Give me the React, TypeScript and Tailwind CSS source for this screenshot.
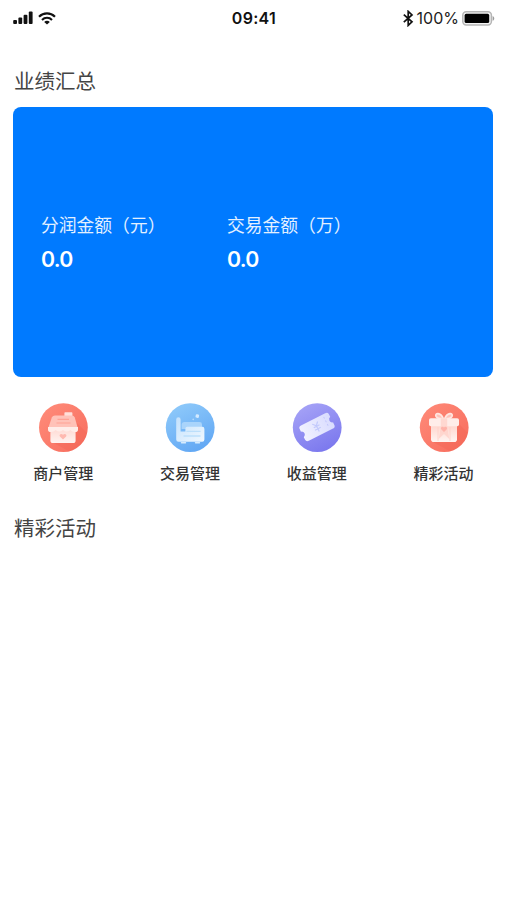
import type { ReactNode } from 'react';

const SignalIcon = () => (
  <svg width="21" height="14" viewBox="0 0 21 14" fill="#111">
    <rect x="0.2" y="9" width="3.8" height="4" rx="1" />
    <rect x="5.4" y="6.6" width="3.8" height="6.4" rx="1" />
    <rect x="10.6" y="3.8" width="3.8" height="9.2" rx="1" />
    <rect x="15.8" y="0.6" width="3.8" height="12.4" rx="1" />
  </svg>
);

const WifiIcon = () => (
  <svg width="18" height="13" viewBox="0 0 18 13" fill="none" stroke="#111" strokeWidth="2.1">
    <path d="M1 4.8 C5.5 0.2 12.5 0.2 17 4.8" />
    <path d="M4 7.9 C6.8 5.1 11.2 5.1 14 7.9" />
    <path d="M9 12.6 L6.2 9.9 C7.8 8.4 10.2 8.4 11.8 9.9 Z" fill="#111" stroke="none" />
  </svg>
);

const BluetoothIcon = () => (
  <svg width="11" height="17" viewBox="0 0 11 17" fill="none" stroke="#111" strokeWidth="1.7">
    <path d="M0.8 4.6 L9 11.8 L5.2 15.4 V1.4 L9 5 L0.8 12.2" />
  </svg>
);

const BatteryIcon = () => (
  <svg width="33" height="15" viewBox="0 0 33 15">
    <rect x="0.8" y="0.8" width="28.6" height="13.2" rx="3.4" fill="#f4f4f4" stroke="#b5b5b5" strokeWidth="1.5" />
    <rect x="2.6" y="2.8" width="24.6" height="9.2" rx="1.6" fill="#000" />
    <path d="M30.6 5 C32.8 5.8 32.8 9 30.6 9.8 Z" fill="#9a9a9a" />
  </svg>
);

const ShopIcon = () => (
  <svg width="50" height="50" viewBox="0 0 50 50">
    <defs>
      <linearGradient id="shopBg" x1="0" y1="0" x2="1" y2="1">
        <stop offset="0" stopColor="#ff8d7b" />
        <stop offset="1" stopColor="#f76c5d" />
      </linearGradient>
      <linearGradient id="shopBody" x1="0" y1="0" x2="0" y2="1">
        <stop offset="0" stopColor="#ffd9d2" />
        <stop offset="1" stopColor="#fff3f0" />
      </linearGradient>
    </defs>
    <circle cx="25.4" cy="24.6" r="24.4" fill="url(#shopBg)" />
    <path d="M39 20 L49 30 A24.4 24.4 0 0 1 31 48.3 L14 39 Z" fill="#f06151" opacity="0.3" />
    <rect x="26.4" y="9.2" width="8" height="6" rx="0.8" fill="#ffe0da" />
    <path d="M17 12.6 H34 Q36 12.6 36.8 14.6 L40 26 H10 L13.8 14.6 Q14.6 12.6 17 12.6 Z" fill="#ffc2b8" />
    <path d="M19.5 16.4 H31 M18.5 20 H32.5" stroke="#ffa194" strokeWidth="1.1" />
    <path d="M12.4 25 H37.6 V37.4 Q37.6 40 35 40 H15 Q12.4 40 12.4 37.4 Z" fill="url(#shopBody)" />
    <path d="M10 24 H40 V26.4 Q40 29 37 29 Q34 29 32.4 27 Q28.7 30 25 27 Q21.3 30 17.6 27 Q16 29 13 29 Q10 29 10 26.4 Z" fill="#ffede9" />
    <path d="M25 36.6 L21.9 33.6 C20.5 31.8 23.3 30 25 31.8 C26.7 30 29.5 31.8 28.1 33.6 Z" fill="#ffb9b0" />
  </svg>
);

const TradeIcon = () => (
  <svg width="50" height="50" viewBox="0 0 50 50">
    <defs>
      <linearGradient id="tradeBg" x1="0.2" y1="0" x2="0.7" y2="1">
        <stop offset="0" stopColor="#8fcafa" />
        <stop offset="1" stopColor="#61a7f4" />
      </linearGradient>
      <linearGradient id="tradeBody" x1="0" y1="0" x2="1" y2="1">
        <stop offset="0" stopColor="#c3e1fc" />
        <stop offset="1" stopColor="#f0f8ff" />
      </linearGradient>
    </defs>
    <circle cx="25.2" cy="24.6" r="24.4" fill="url(#tradeBg)" />
    <path d="M16.6 22 Q16.6 19 19.4 19 H34.5 Q37 19 37 21.4 V26 H16.6 Z" fill="#a9d4fb" />
    <path d="M11.2 16.6 Q11.2 14.2 13.4 14.2 Q15.6 14.2 15.6 16.6 V28.6 H20.4 V25.4 Q20.4 23.8 22.2 23.8 H37.4 Q39.4 23.8 39.4 26 V36.6 Q39.4 38.8 37.2 38.8 H13.6 Q11.2 38.8 11.2 36.4 Z" fill="url(#tradeBody)" />
    <path d="M22 28.4 H35 M19 33 H35" stroke="#bcdffb" strokeWidth="1.4" strokeLinecap="round" />
    <path d="M16.5 39.8 H20.5 M30.5 39.8 H34.5" stroke="#d6ebfd" strokeWidth="1.4" strokeLinecap="round" />
    <rect x="30.6" y="11.4" width="3.4" height="3.4" rx="1" fill="#d4eaff" transform="rotate(12 32.3 13.1)" />
    <circle cx="28.2" cy="16.4" r="0.8" fill="#b8dcfc" />
  </svg>
);

const TicketIcon = () => (
  <svg width="50" height="50" viewBox="0 0 50 50">
    <defs>
      <linearGradient id="ticketBg" x1="0.1" y1="0" x2="0.6" y2="1">
        <stop offset="0" stopColor="#a8a5f7" />
        <stop offset="1" stopColor="#7c79ee" />
      </linearGradient>
      <linearGradient id="ticketBody" x1="0" y1="0" x2="1" y2="0">
        <stop offset="0" stopColor="#f1f1ff" />
        <stop offset="1" stopColor="#d9dcfe" />
      </linearGradient>
    </defs>
    <circle cx="25.2" cy="24.6" r="24.4" fill="url(#ticketBg)" />
    <g transform="rotate(-27 25 24)">
      <path
        d="M11.4 15.4 H38.6 Q41.4 15.4 41.4 18 V20.9 A3.2 3.2 0 0 0 41.4 27.1 V30 Q41.4 32.6 38.6 32.6 H11.4 Q8.6 32.6 8.6 30 V27.1 A3.2 3.2 0 0 0 8.6 20.9 V18 Q8.6 15.4 11.4 15.4 Z"
        fill="url(#ticketBody)"
      />
      <path d="M22 19.4 L25 22.6 L28 19.4 M25 22.6 V29 M21.8 23.2 H28.2 M21.8 26 H28.2" fill="none" stroke="#c2c9fc" strokeWidth="1.2" />
      <path d="M35.5 18 V30" stroke="#c2c5fb" strokeWidth="0.9" strokeDasharray="2 2" />
    </g>
  </svg>
);

const GiftIcon = () => (
  <svg width="50" height="50" viewBox="0 0 50 50">
    <defs>
      <linearGradient id="giftBg" x1="0" y1="0" x2="1" y2="1">
        <stop offset="0" stopColor="#ff8b79" />
        <stop offset="1" stopColor="#f76b5c" />
      </linearGradient>
      <linearGradient id="giftBody" x1="0" y1="0" x2="0" y2="1">
        <stop offset="0" stopColor="#ffd5cd" />
        <stop offset="1" stopColor="#fff5f2" />
      </linearGradient>
    </defs>
    <circle cx="25.2" cy="24.6" r="24.4" fill="url(#giftBg)" />
    <path d="M39 20 L49 30 A24.4 24.4 0 0 1 31 48.3 L14 39 Z" fill="#f06151" opacity="0.3" />
    <path d="M24.4 15.8 C21.4 8.8 15.6 9.8 17 13.4 C17.8 15.2 21 15.8 24.4 15.8 Z M25.6 15.8 C28.6 8.8 34.4 9.8 33 13.4 C32.2 15.2 29 15.8 25.6 15.8 Z" fill="#ffc2b8" stroke="#ffe6e1" strokeWidth="1.7" />
    <path d="M12 22 H38 V36.2 Q38 39 35.2 39 H14.8 Q12 39 12 36.2 Z" fill="url(#giftBody)" />
    <rect x="10" y="15.2" width="30" height="8" rx="1.8" fill="#ffede9" />
    <path d="M21.8 15.2 H28.2 V24 L30.4 36 L25 31 L19.6 36 L21.8 24 Z" fill="#ffd0c8" opacity="0.75" />
    <path d="M19 24 V38 M31 24 V38" stroke="#ffcfc7" strokeWidth="0.8" />
    <path d="M25 29 L22.2 26.2 C21 24.4 23.6 22.8 25 24.4 C26.4 22.8 29 24.4 27.8 26.2 Z" fill="#ffb3aa" />
  </svg>
);

type MenuItem = { label: string; icon: ReactNode };

const App = () => {
  const stats = [
    { label: '分润金额（元）', value: '0.0' },
    { label: '交易金额（万）', value: '0.0' },
  ];

  const menu: MenuItem[] = [
    { label: '商户管理', icon: <ShopIcon /> },
    { label: '交易管理', icon: <TradeIcon /> },
    { label: '收益管理', icon: <TicketIcon /> },
    { label: '精彩活动', icon: <GiftIcon /> },
  ];

  return (
    <div className="min-h-screen bg-white font-['Inter','Noto_Sans_CJK_SC',sans-serif]">
      <header className="grid h-9 grid-cols-3 items-center pl-[13px] pr-3 text-[#111]">
        <div className="flex items-center gap-1">
          <SignalIcon />
          <WifiIcon />
        </div>
        <div className="text-center text-base font-semibold leading-none tracking-[0.3px]">09:41</div>
        <div className="flex items-center justify-end gap-[3px]">
          <BluetoothIcon />
          <span className="text-base leading-none text-[#222]">100%</span>
          <BatteryIcon />
        </div>
      </header>

      <main>
        <h2 className="mt-[31px] px-3.5 text-[20.5px] leading-[30px] text-[#444]">业绩汇总</h2>

        <section className="ml-[13.4px] mr-[13.6px] mt-[10.4px] flex h-[270px] rounded-lg bg-[#007aff] pl-[27.6px] pt-[104.6px] text-white">
          {stats.map((stat) => (
            <div key={stat.label} className="w-[186px]">
              <div className="whitespace-nowrap text-[17.8px] leading-7 text-[#e3f0ff]">{stat.label}</div>
              <div className="mt-[5px] text-[21.3px] font-semibold leading-7 tracking-[-0.7px]">{stat.value}</div>
            </div>
          ))}
        </section>

        <nav className="mt-[25.6px] grid grid-cols-4">
          {menu.map((item) => (
            <div key={item.label} className="flex flex-col items-center">
              {item.icon}
              <span className="mt-[11px] text-[15px] font-medium leading-5 text-[#333]">{item.label}</span>
            </div>
          ))}
        </nav>

        <h2 className="mt-[30px] px-3.5 text-[20.5px] leading-[30px] text-[#444]">精彩活动</h2>
      </main>
    </div>
  );
};

export default App;
